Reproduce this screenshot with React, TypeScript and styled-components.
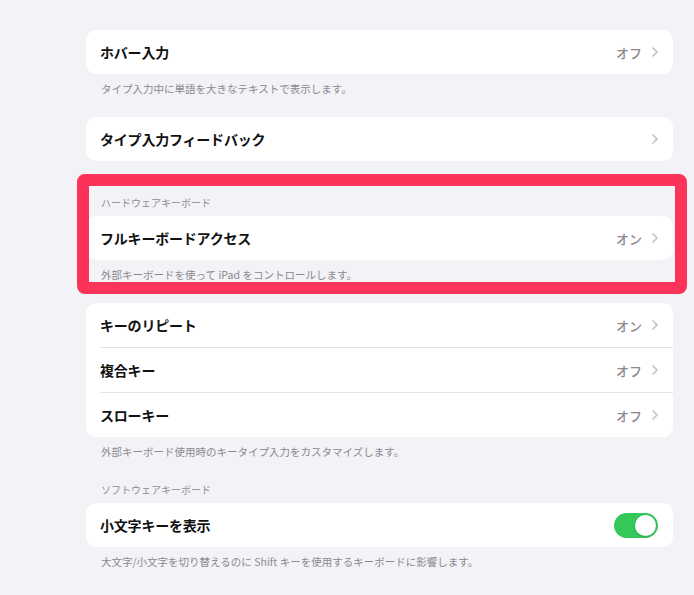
import * as React from "react";
import styled, { createGlobalStyle } from "styled-components";

const GlobalStyle = createGlobalStyle`
  html, body {
    margin: 0;
    padding: 0;
    background: #f2f2f7;
  }
  body {
    font-family: "Noto Sans CJK JP", "Noto Sans", sans-serif;
    -webkit-font-smoothing: antialiased;
  }
`;

const Page = styled.div`
  min-height: 595px;
  box-sizing: border-box;
  padding: 30px 21px 0 86px;
  background: #f2f2f7;
`;

const Section = styled.section<{ $top?: number; $highlight?: boolean }>`
  position: relative;
  margin-top: ${(p) => p.$top ?? 0}px;
  ${(p) =>
    p.$highlight &&
    `
    &::after {
      content: "";
      position: absolute;
      top: -22px;
      left: -9px;
      right: -14px;
      bottom: -12px;
      border: 12px solid #fb3358;
      border-radius: 8px;
      pointer-events: none;
    }
  `}
`;

const Header = styled.div`
  font-size: 10px;
  line-height: 14px;
  color: #8e8e93;
  padding-left: 15px;
  margin-bottom: 6px;
`;

const Footer = styled.div`
  font-size: 10.5px;
  line-height: 14px;
  color: #8a8a8e;
  padding-left: 15px;
  margin-top: 8px;
`;

// latin words inside japanese text get a little air on both sides
const Latin = styled.span`
  margin: 0 2.5px;
`;

const Card = styled.div`
  background: #ffffff;
  border-radius: 10px;
  overflow: hidden;
`;

const Row = styled.div`
  display: flex;
  padding-left: 14px;
`;

const RowBody = styled.div<{ $divided?: boolean }>`
  flex: 1;
  display: flex;
  align-items: center;
  height: 44px;
  padding-right: 15px;
  border-top: ${(p) => (p.$divided ? "1px solid #e3e3e8" : "none")};
`;

const Title = styled.span`
  flex: 1;
  font-size: 14px;
  font-weight: 700;
  color: #111111;
  letter-spacing: -0.2px;
`;

const Value = styled.span`
  font-size: 13px;
  font-weight: 500;
  color: #8a8a8e;
  margin-right: 10px;
`;

const Switch = styled.span<{ $on?: boolean }>`
  display: inline-flex;
  align-items: center;
  justify-content: ${(p) => (p.$on ? "flex-end" : "flex-start")};
  box-sizing: border-box;
  width: 44px;
  height: 25px;
  padding: 2px;
  border-radius: 13px;
  background: ${(p) => (p.$on ? "#34c759" : "#e9e9ea")};
`;

const Knob = styled.span`
  width: 21px;
  height: 21px;
  border-radius: 50%;
  background: #ffffff;
  box-shadow: 0 1px 2px rgba(0, 0, 0, 0.15);
`;

const Chevron = () => (
  <svg width="6" height="10" viewBox="0 0 6 10" fill="none">
    <path d="M1 1l4 4-4 4" stroke="#c4c4c7" strokeWidth="1.7" strokeLinecap="round" strokeLinejoin="round" />
  </svg>
);

type Item = { title: string; value?: string; toggle?: boolean };

const Rows = ({ items }: { items: Item[] }) => (
  <Card>
    {items.map((item, i) => (
      <Row key={item.title}>
        <RowBody $divided={i > 0}>
          <Title>{item.title}</Title>
          {item.toggle ? (
            <Switch $on>
              <Knob />
            </Switch>
          ) : (
            <>
              {item.value && <Value>{item.value}</Value>}
              <Chevron />
            </>
          )}
        </RowBody>
      </Row>
    ))}
  </Card>
);

export default function App() {
  return (
    <Page>
      <GlobalStyle />
      <Section>
        <Rows items={[{ title: "ホバー入力", value: "オフ" }]} />
        <Footer>タイプ入力中に単語を大きなテキストで表示します。</Footer>
      </Section>

      <Section $top={21}>
        <Rows items={[{ title: "タイプ入力フィードバック" }]} />
      </Section>

      <Section $top={35} $highlight>
        <Header>ハードウェアキーボード</Header>
        <Rows items={[{ title: "フルキーボードアクセス", value: "オン" }]} />
        <Footer>
          外部キーボードを使って<Latin>iPad</Latin>をコントロールします。
        </Footer>
      </Section>

      <Section $top={21}>
        <Rows
          items={[
            { title: "キーのリピート", value: "オン" },
            { title: "複合キー", value: "オフ" },
            { title: "スローキー", value: "オフ" },
          ]}
        />
        <Footer>外部キーボード使用時のキータイプ入力をカスタマイズします。</Footer>
      </Section>

      <Section $top={24}>
        <Header>ソフトウェアキーボード</Header>
        <Rows items={[{ title: "小文字キーを表示", toggle: true }]} />
        <Footer>
          大文字/小文字を切り替えるのに<Latin>Shift</Latin>キーを使用するキーボードに影響します。
        </Footer>
      </Section>
    </Page>
  );
}
